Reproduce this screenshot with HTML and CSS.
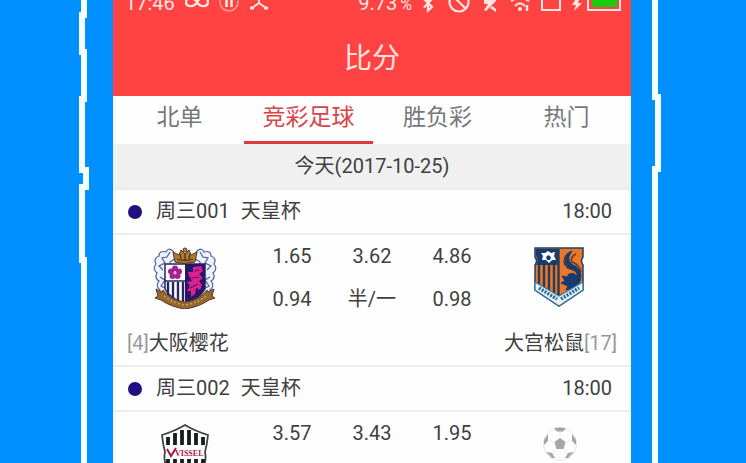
FILE: index.html
```html
<!DOCTYPE html>
<html lang="zh-CN">
<head>
    <meta charset="UTF-8">
    <meta name="viewport" content="width=device-width, initial-scale=1.0">
    <title>比分</title>
    <link rel="stylesheet" href="styles.css">
</head>
<body>
    <div class="stage">
        <div class="edge edge-left">
            <svg width="14" height="463" viewBox="0 0 14 463" fill="none" stroke="#f4fdff" stroke-width="6" aria-hidden="true">
                <path d="M7 0V15H5V52H7V99H5V170H9V187H5V260H7V463"/>
            </svg>
        </div>

        <main class="screen">
            <header class="top">
                <div class="status-bar">
                    <div class="status-group">
                        <span class="clock">17:46</span>
                        <svg width="24" height="14" viewBox="0 0 24 14" fill="none" stroke="#ffe4e0" stroke-width="2.4">
                            <path d="M12 2C9-3 1-3 1 2S9 8 12 2S23-3 23 2S15 8 12 2"/>
                        </svg>
                        <svg width="20" height="14" viewBox="0 0 20 14" fill="none" stroke="#ff9c98" stroke-width="1.5">
                            <circle cx="10" cy="2" r="9"/>
                            <path d="M7.5 0V7M12.5 0V7" stroke="#ffe4e0" stroke-width="2.6"/>
                        </svg>
                        <svg width="20" height="14" viewBox="0 0 20 14" fill="none" stroke="#ffe4e0" stroke-width="2">
                            <path d="M10 0V3L3 8M10 3L17 8"/>
                            <path d="M1 8H5M15 8H19" stroke-width="3"/>
                        </svg>
                    </div>
                    <div class="status-group status-right">
                        <span class="speed">9.73<small>%</small></span>
                        <svg width="14" height="14" viewBox="0 0 14 14" fill="none" stroke="#ffe4e0" stroke-width="2.2">
                            <path d="M1 -1L9 7L5 10.5V-4L9 -1L1 7.5"/>
                        </svg>
                        <svg width="22" height="14" viewBox="0 0 22 14" fill="none" stroke="#ffe4e0" stroke-width="2.2">
                            <circle cx="11" cy="2" r="9.5"/>
                            <path d="M4 -5L18 9"/>
                        </svg>
                        <svg width="16" height="14" viewBox="0 0 16 14" fill="#ffe4e0">
                            <path d="M3 0H8L15 -4V1L5 11L3 10L7 4H3Z"/>
                            <path d="M11 6L15 9V12L9 8Z"/>
                        </svg>
                        <svg width="22" height="14" viewBox="0 0 22 14" fill="none" stroke="#ffe4e0" stroke-width="2.2">
                            <path d="M3 1Q12-5 21 1M7 6Q12 1 17 6"/>
                            <circle cx="12" cy="9" r="2" fill="#ffe4e0" stroke="none"/>
                            <path d="M19 5V11" stroke-width="2.5"/>
                        </svg>
                        <svg width="20" height="14" viewBox="0 0 20 14" fill="none" stroke="#ffe4e0" stroke-width="2">
                            <path d="M1 0V10H19V0"/>
                        </svg>
                        <div class="status-group power">
                            <svg width="10" height="14" viewBox="0 0 10 14" fill="#ffe4e0">
                                <path d="M5 -3L0 5H4L2 11L10 3H6L8 -3Z"/>
                            </svg>
                            <svg width="34" height="14" viewBox="0 0 34 14">
                                <path d="M1 0V10H33V0" fill="none" stroke="#ffe4e0" stroke-width="2"/>
                                <rect x="5" y="0" width="25" height="7" fill="#18cc10"/>
                            </svg>
                        </div>
                    </div>
                </div>
                <h1 class="title">比分</h1>
            </header>

            <nav class="tabs">
                <button class="tab">北单</button>
                <button class="tab active">竞彩足球</button>
                <button class="tab">胜负彩</button>
                <button class="tab">热门</button>
            </nav>

            <h2 class="date">今天(2017-10-25)</h2>

            <section class="match">
                <div class="match-head">
                    <span class="dot"></span>
                    <span class="match-no">周三001</span>
                    <span class="league">天皇杯</span>
                    <time class="kickoff">18:00</time>
                </div>
                <div class="match-body">
                    <div class="crest">
                        <svg width="64" height="62" viewBox="0 0 64 62" role="img" aria-label="大阪樱花">
                            <g fill="#eef2fb" stroke="#4d5d98" stroke-width="1.2">
                                <path d="M20 4Q15 0 13 5Q6 3 6 9Q0 11 3 17Q-1 22 4 26Q1 31 6 34Q2 39 7 43L5 48L17 51V15L23 11Z"/>
                                <path d="M44 4Q49 0 51 5Q58 3 58 9Q64 11 61 17Q65 22 60 26Q63 31 58 34Q62 39 57 43L59 48L47 51V15L41 11Z"/>
                                <path d="M17 5L14 10L9 11L12 16L6 19L10 23M7 30L12 33L8 39L14 42M47 5L50 10L55 11L52 16L58 19L54 23M57 30L52 33L56 39L50 42" fill="none"/>
                            </g>
                            <path d="M12 17H52V42Q47 51 32 57Q17 51 12 42Z" fill="#fff" stroke="#26245f" stroke-width="1.5"/>
                            <path d="M32 17H52V42Q47 51 32 57Z" fill="#26176b"/>
                            <path d="M12 34H32" stroke="#26245f" stroke-width="1.5"/>
                            <path d="M15 35V48M20 35V51M25 35V54M30 35V56" stroke="#28285e" stroke-width="2.4"/>
                            <g fill="#a12491">
                                <circle cx="22" cy="21.5" r="3"/>
                                <circle cx="26" cy="24.5" r="3"/>
                                <circle cx="24.5" cy="29" r="3"/>
                                <circle cx="19.5" cy="29" r="3"/>
                                <circle cx="18" cy="24.5" r="3"/>
                            </g>
                            <circle cx="22" cy="26" r="1.5" fill="#e7a8d6"/>
                            <path d="M40 20L48 19L50 24L46 27L50 31L46 34L49 38L47 43L43 41L42 47L38 50L38 44L34 44L37 39L34 35L39 34L36 29L35 25L40 25Z" fill="#dc218e"/>
                            <path d="M38 31L46 30M37 41L45 37M42 24L46 23" stroke="#55156f" stroke-width="1.2"/>
                            <path d="M22 15L20 5L26 8L28 3L32 7L36 3L38 8L44 5L42 15Q32 18 22 15Z" fill="#b07a35" stroke="#51351c"/>
                            <circle cx="32" cy="3" r="2" fill="#c08a3c" stroke="#51351c"/>
                            <path d="M24 12Q32 15 40 12M27 7L28 12M37 7L36 12M32 7V13" fill="none" stroke="#54361b" stroke-width="1.3"/>
                            <path d="M3 42L9 45L10 43Q17 53 32 55Q47 53 54 43L55 45L61 42L59 49L62 51L56 53Q46 60 32 62Q18 60 8 53L2 51L5 49Z" fill="#96672f" stroke="#59391e"/>
                            <path d="M11 49Q19 56 32 58Q45 56 53 49" fill="none" stroke="#c99b5f" stroke-width="1.5" stroke-dasharray="2 2"/>
                        </svg>
                    </div>
                    <table class="odds">
                        <tr>
                            <td>1.65</td>
                            <td>3.62</td>
                            <td>4.86</td>
                        </tr>
                        <tr>
                            <td>0.94</td>
                            <td>半/一</td>
                            <td>0.98</td>
                        </tr>
                    </table>
                    <div class="crest">
                        <svg width="50" height="60" viewBox="0 0 50 60" role="img" aria-label="大宫松鼠">
                            <path d="M1 1H49V10Q46 14 49 18V43L25 59L1 43V18Q4 14 1 10Z" fill="#e9782c" stroke="#263d61" stroke-width="1.5"/>
                            <path d="M2 2H25V18H2Q5 13 2 9Z" fill="#163d70"/>
                            <path d="M5 18V38M10 18V41M15 18V43M20 18V46M24.5 2V48" stroke="#263c5a" stroke-width="2.4"/>
                            <path d="M14 4L17 6L21 5L20 9L22 13L18 13L15 16L12 13L8 13L9 9L7 6L11 6Z" fill="#fff"/>
                            <path d="M14.5 8L17 10L16 13H13L12 10Z" fill="#163d70"/>
                            <path d="M38 4Q30 7 30 14Q30 20 36 22Q44 24 43 29Q40 25 35 27L33 30L28 29L31 34L27 36L34 39L32 43Q47 40 47 29Q47 21 39 18Q34 15 35 9Z" fill="#173b70" stroke="#173b70"/>
                            <path d="M42 7Q36 10 38 15Q46 18 47 25M32 9Q29 17 35 22" fill="none" stroke="#5c3c38" stroke-width="1.5"/>
                            <path d="M1 35L25 49L49 35V43L25 59L1 43Z" fill="#e8f3f8" stroke="#3679a3" stroke-width="1.3"/>
                            <path d="M5 41L23 52M27 52L45 41" stroke="#286894" stroke-width="3.5" stroke-dasharray="2 1.3"/>
                        </svg>
                    </div>
                    <p class="team home"><span class="rank">[4]</span>大阪樱花</p>
                    <p class="team away">大宫松鼠<span class="rank">[17]</span></p>
                </div>
            </section>

            <section class="match">
                <div class="match-head">
                    <span class="dot"></span>
                    <span class="match-no">周三002</span>
                    <span class="league">天皇杯</span>
                    <time class="kickoff">18:00</time>
                </div>
                <div class="match-body">
                    <div class="crest">
                        <svg width="50" height="62" viewBox="0 0 50 62" role="img" aria-label="Vissel">
                            <path d="M2 11Q15 7 25 1Q35 7 48 11Q47 21 45 28Q49 46 25 61Q1 46 5 28Q3 21 2 11Z" fill="#fff" stroke="#3e4543" stroke-width="1.8"/>
                            <path d="M8 13V21M15 9V21M22 6V21M29 6V21M36 9V21M43 13V21M8 35V43M15 35V50M22 35V55M29 35V55M36 35V50M43 35V43" stroke="#171d1c" stroke-width="3.8"/>
                            <path d="M7 25L11 32L16 24" fill="none" stroke="#a81843" stroke-width="2"/>
                            <text class="crest-text" x="15" y="32">VISSEL</text>
                        </svg>
                    </div>
                    <table class="odds">
                        <tr>
                            <td>3.57</td>
                            <td>3.43</td>
                            <td>1.95</td>
                        </tr>
                    </table>
                    <div class="crest">
                        <svg width="36" height="62" viewBox="0 0 36 62" role="img" aria-label="足球">
                            <circle cx="19" cy="20" r="16.5" fill="#fdfdfd" stroke="#e6e6e6"/>
                            <g transform="translate(1 0)">
                                <path d="M18 14L23.5 18L21.5 25H14.5L12.5 18Z" fill="#a6a6a6"/>
                                <path d="M18 14V7M23.5 18L30 16M21.5 25L26 31M14.5 25L10 31M12.5 18L6 16" stroke="#ededed"/>
                                <path d="M12 4.5Q18 2.5 24 4.5L21 7.5H15ZM30 10L34 16V21L30 17ZM32 28L26 34L23 34L26 29ZM4 28L10 34L13 34L10 29ZM6 10L2 16V21L6 17Z" fill="#a6a6a6"/>
                            </g>
                        </svg>
                    </div>
                </div>
            </section>
        </main>

        <div class="edge edge-right">
            <svg width="14" height="463" viewBox="0 0 14 463" fill="none" stroke="#f4fdff" stroke-width="6" aria-hidden="true">
                <path d="M6 0V97H9V169H6V463"/>
            </svg>
        </div>
    </div>
</body>
</html>
```

FILE: styles.css
```css
* {
    box-sizing: border-box;
}

body {
    margin: 0;
    font-family: Roboto, "Noto Sans CJK SC", sans-serif;
    font-size: 20px;
    color: #404040;
    background-color: #0090ff;
}

.stage {
    display: grid;
    grid-template-columns: 113px 1fr 115px;
    height: 100vh;
    overflow: hidden;
}

.edge {
    display: flex;
}

.edge-left {
    justify-content: flex-end;
    padding-right: 22px;
}

.edge-right {
    padding-left: 18px;
}

.screen {
    background-color: #fefefe;
}

/* header */
.top {
    background-color: #ff4242;
    color: #ffe4e0;
}

.status-bar {
    display: flex;
    justify-content: space-between;
    height: 22px;
    padding: 0 10px 0 12px;
}

.status-group {
    display: flex;
    gap: 10px;
    line-height: 7px;
}

.status-right {
    gap: 11px;
}

.power {
    gap: 5px;
}

.speed small {
    margin-left: 3px;
    font-size: 16px;
}

.title {
    margin: 0;
    font-size: 28px;
    font-weight: 400;
    line-height: 74px;
    text-align: center;
}

/* tabs */
.tabs {
    display: grid;
    grid-template-columns: repeat(4, 1fr);
    padding-left: 2px;
}

.tab {
    height: 48px;
    padding: 0 0 8px;
    border: none;
    border-bottom: 3px solid transparent;
    background: none;
    font-family: inherit;
    font-size: 23px;
    color: #777;
    cursor: pointer;
}

.tab.active {
    color: #d9444a;
    border-bottom-color: #dc3a40;
}

.date {
    margin: 0;
    border-bottom: 2px solid #ececec;
    background-color: #f0f0f0;
    font-size: 20px;
    font-weight: 400;
    line-height: 44px;
    text-align: center;
}

/* matches */
.match {
    border-bottom: 2px solid #eee;
}

.match-head {
    display: flex;
    align-items: center;
    padding: 0 19px 0 15px;
    border-bottom: 2px solid #eee;
    line-height: 43px;
}

.dot {
    width: 14px;
    height: 14px;
    margin-right: 14px;
    border-radius: 50%;
    background-color: #221080;
}

.match-no {
    margin-right: 11px;
}

.kickoff {
    margin-left: auto;
}

.match-body {
    display: grid;
    grid-template-columns: 116px 1fr 116px;
    padding: 0 14px;
}

.crest {
    display: flex;
    justify-content: center;
    padding-top: 12px;
}

.crest svg {
    display: block;
}

.crest-text {
    font-family: "Liberation Serif", serif;
    font-size: 8px;
    font-weight: 700;
    fill: #a81843;
}

.odds {
    align-self: start;
    justify-self: center;
    width: 240px;
    border-collapse: collapse;
    table-layout: fixed;
}

.odds td {
    height: 43px;
    padding: 0;
    line-height: 43px;
    text-align: center;
}

.team {
    margin: 0;
    line-height: 44px;
    white-space: nowrap;
}

.home {
    grid-column: 1 / 2;
}

.away {
    grid-column: 2 / 4;
    text-align: right;
}

.rank {
    color: #999;
}
```
